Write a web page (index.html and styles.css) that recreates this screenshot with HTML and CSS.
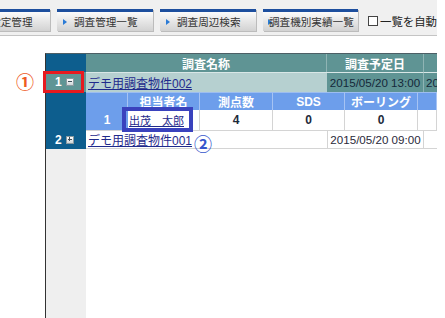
FILE: index.html
```html
<!DOCTYPE html>
<html lang="ja">
<head>
<meta charset="utf-8">
<link rel="stylesheet" href="styles.css">
</head>
<body>
<div class="toolbar">
  <div class="tab tab-first"><span class="tri"></span><span>調査設定管理</span></div>
  <div class="tab"><span class="tri"></span><span>調査管理一覧</span></div>
  <div class="tab"><span class="tri"></span><span>調査周辺検索</span></div>
  <div class="tab tab-tight"><span class="tri"></span><span>調査機別実績一覧</span></div>
  <label class="auto"><span class="box"></span><span>一覧を自動</span></label>
</div>
<div class="main">
  <div class="frame">
    <div class="row r-head">
      <div class="lc"></div>
      <div class="c w-name">調査名称</div>
      <div class="c w-date">調査予定日</div>
      <div class="c w-rest"></div>
    </div>
    <div class="row r-one">
      <div class="lc lc-teal"><span class="num">1</span><span class="tog tog-minus"></span></div>
      <div class="c w-name name"><a href="#">デモ用調査物件002</a></div>
      <div class="c w-date date">2015/05/20 13:00</div>
      <div class="c w-rest date">20</div>
    </div>
    <div class="row r-subhead">
      <div class="lc"></div>
      <div class="c s1"></div>
      <div class="c s2">担当者名</div>
      <div class="c s3">測点数</div>
      <div class="c s4">SDS</div>
      <div class="c s5">ボーリング</div>
      <div class="c s6"></div>
    </div>
    <div class="row r-sub">
      <div class="lc"></div>
      <div class="c s1 idx">1</div>
      <div class="c s2 cell person"><a href="#">出茂　太郎</a></div>
      <div class="c s3 cell">4</div>
      <div class="c s4 cell">0</div>
      <div class="c s5 cell">0</div>
      <div class="c s6 cell"></div>
    </div>
    <div class="row r-two">
      <div class="lc"><span class="num">2</span><span class="tog tog-plus"></span></div>
      <div class="c w-name name"><a href="#">デモ用調査物件001</a></div>
      <div class="c w-date date">2015/05/20 09:00</div>
      <div class="c w-rest"></div>
    </div>
    <div class="row r-fill">
      <div class="lc lc-grey"></div>
      <div class="c fill"></div>
    </div>
  </div>
  <div class="hl-red"></div>
  <div class="hl-blue"></div>
  <span class="mark mark1">①</span>
  <span class="mark mark2">②</span>
</div>
</body>
</html>
```
FILE: styles.css
```css
html, body {
  margin: 0;
  padding: 0;
  background: #ffffff;
}
body {
  width: 445px;
  height: 318px;
  overflow: hidden;
  font-family: "Liberation Sans", "Noto Sans CJK JP", sans-serif;
  font-size: 12px;
  color: #222;
}

/* toolbar */
.toolbar {
  width: 437px;
  height: 36px;
  box-sizing: border-box;
  background: #f0f0f0;
  border-bottom: 1px solid #c4c4c4;
  display: flex;
  align-items: flex-start;
  gap: 7px;
  padding-top: 9px;
  overflow: hidden;
}
.tab {
  flex: none;
  width: 96px;
  height: 22px;
  box-sizing: border-box;
  border-top: 3px solid #1d4f9e;
  background: linear-gradient(#fbfbfb, #e6e6e6 50%, #d2d2d2);
  box-shadow: 1px 1px 0 #bcbcbc;
  display: flex;
  align-items: center;
  padding-left: 6px;
  font-family: "Noto Sans CJK JP", sans-serif;
  font-size: 10.6px;
  color: #333;
  white-space: nowrap;
}
.tab-first {
  width: 100px;
  margin-left: -50px;
}
.tri {
  width: 0;
  height: 0;
  border-left: 4px solid #2b7bd6;
  border-top: 3px solid transparent;
  border-bottom: 3px solid transparent;
  margin-right: 7px;
}
.tab-first .tri {
  margin-right: 9px;
}
.tab-tight {
  width: 95px;
  padding-left: 5px;
}
.tab-tight .tri {
  margin-right: -3px;
}
.auto {
  display: flex;
  align-items: center;
  margin-left: 3px;
  margin-top: 4px;
  font-family: "Noto Sans CJK JP", sans-serif;
  font-size: 11.4px;
  color: #222;
  white-space: nowrap;
}
.box {
  width: 10px;
  height: 10px;
  box-sizing: border-box;
  border: 1px solid #444;
  background: #fff;
  margin-right: 2px;
}

/* main table */
.main {
  position: relative;
  padding-left: 45px;
  padding-top: 17px;
}
.frame {
  width: 392px;
  height: 265px;
  box-sizing: border-box;
  border-left: 1px solid #333;
  border-top: 1px solid #4d5f66;
  display: flex;
  flex-direction: column;
  overflow: hidden;
}
.row {
  display: flex;
  flex: none;
}
.lc {
  width: 40px;
  flex: none;
  background: #0d5e8e;
  display: flex;
  align-items: center;
  padding-left: 9px;
  box-sizing: border-box;
  color: #fff;
  font-weight: bold;
}
.lc-teal {
  background: #5f9595;
}
.lc-grey {
  background: #efefef;
}
.num {
  font-size: 12px;
  margin-right: 3px;
}
.tog {
  width: 8px;
  height: 8px;
  box-sizing: border-box;
  border: 1px solid #8a9aa0;
  background: linear-gradient(#ffffff, #cfd6d8);
  position: relative;
  margin-left: 1px;
}
.tog::before {
  content: "";
  position: absolute;
  left: 1px;
  top: 2px;
  width: 4px;
  height: 1px;
  background: #40505a;
}
.tog-plus::after {
  content: "";
  position: absolute;
  left: 2.5px;
  top: 0.5px;
  width: 1px;
  height: 4px;
  background: #40505a;
}
.c {
  flex: none;
  box-sizing: border-box;
  display: flex;
  align-items: center;
  justify-content: center;
  white-space: nowrap;
  overflow: hidden;
}
.w-name { width: 241px; }
.w-date { width: 97px; }
.w-rest { width: 13px; justify-content: flex-start; }
.s1 { width: 42px; }
.s2 { width: 72px; }
.s3 { width: 73px; }
.s4 { width: 72px; }
.s5 { width: 73px; }
.s6 { width: 19px; }

.r-head { height: 18px; }
.r-head .c {
  background: #5f9494;
  color: #fff;
  font-weight: bold;
  font-size: 12px;
}
.r-head .w-name { border-right: 1px solid #8fb4b4; }
.r-head .w-date { border-right: 1px solid #8fb4b4; }

.r-one { height: 20px; }
.r-one .c { border-top: 1px solid #d9e7e7; }
.r-one .name { background: #b6d0d0; }
.r-one .date {
  background: #5f9494;
  color: #15283a;
  border-right: 1px solid #8fb4b4;
  font-size: 11.6px;
}
.r-one .w-rest { border-right: 0; padding-left: 2px; }

.name {
  justify-content: flex-start;
  padding-left: 2px;
}
a {
  color: #1f2a8c;
  text-decoration: underline;
}

.r-subhead { height: 18px; }
.r-subhead .c {
  background: #6d9eeb;
  color: #fff;
  font-weight: bold;
  border-right: 1px solid #a6c3f3;
  border-top: 1px solid #9dbdf0;
}

.r-sub { height: 20px; }
.r-sub .idx {
  background: #6d9eeb;
  color: #fff;
  font-weight: bold;
}
.r-sub .cell {
  background: #fff;
  border-right: 1px solid #d4d4d4;
  color: #1c2a3a;
  font-weight: bold;
}
.r-sub .person {
  font-weight: normal;
  font-size: 11px;
  justify-content: flex-start;
  padding-left: 1px;
}

.r-two { height: 19px; }
.r-two .c {
  background: #fff;
  border-top: 1px solid #d4d4d4;
  border-bottom: 1px solid #d4d4d4;
}
.r-two .date {
  border-left: 1px solid #d4d4d4;
  border-right: 1px solid #d4d4d4;
  color: #2a2a3a;
  font-size: 11.6px;
}

.r-fill { flex: 1; }
.fill { flex: 1; background: #fff; }

/* annotations */
.hl-red {
  position: absolute;
  left: 43px;
  top: 35px;
  width: 41px;
  height: 22px;
  box-sizing: border-box;
  border: 3px solid #e81a1f;
}
.hl-blue {
  position: absolute;
  left: 122px;
  top: 71px;
  width: 71px;
  height: 25px;
  box-sizing: border-box;
  border: 4px solid #3a42bd;
}
.mark {
  position: absolute;
  font-family: "Noto Sans CJK JP", sans-serif;
  font-size: 18px;
  font-weight: bold;
  line-height: 1;
}
.mark1 {
  left: 16px;
  top: 36px;
  color: #ee5a24;
}
.mark2 {
  left: 194px;
  top: 98px;
  color: #3556cc;
}
```
